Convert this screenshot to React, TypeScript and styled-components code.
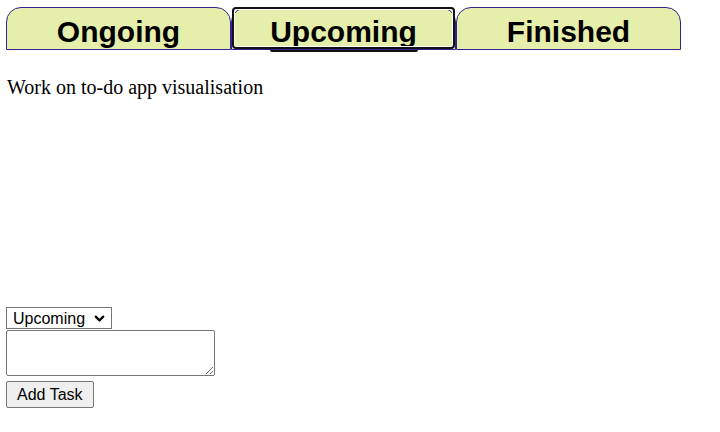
import React, { useState } from "react";
import styled, { createGlobalStyle } from "styled-components";
import { ChevronDown } from "lucide-react";

const GlobalStyle = createGlobalStyle`
  body {
    margin: 0;
    background: #fff;
    font-family: "Liberation Serif", "Times New Roman", serif;
  }
`;

const Page = styled.div`
  padding: 7px 6px 0;
`;

const TabBar = styled.nav`
  display: flex;
`;

const Tab = styled.button<{ $active?: boolean }>`
  position: relative;
  flex: 0 0 225px;
  height: 43px;
  box-sizing: border-box;
  padding: 7px 0 0;
  margin: 0;
  background: #e5eeab;
  border: 1px solid #34238c;
  border-radius: 15px 15px 0 0;
  font-family: "Liberation Sans", Arial, sans-serif;
  font-weight: bold;
  font-size: 30px;
  line-height: 34px;
  color: #000;
  text-align: center;
  cursor: pointer;

  ${(p) =>
    p.$active &&
    `
    &::before {
      content: "";
      position: absolute;
      top: -1px;
      left: 0;
      right: 0;
      bottom: 0;
      border: 2px solid #111;
      border-radius: 4px;
      box-shadow: inset 0 0 0 1px #fff;
    }
    &::after {
      content: "";
      position: absolute;
      top: calc(100% + 1px);
      left: 38px;
      width: 148px;
      height: 2px;
      background: #111;
      border-radius: 0 0 3px 3px;
    }
  `}
`;

const TaskList = styled.ul`
  list-style: none;
  margin: 26px 0 0;
  padding: 0 0 0 1px;
  height: 231px;
`;

const TaskItem = styled.li`
  font-size: 20px;
  line-height: 23px;
  font-family: "Liberation Serif", "Times New Roman", serif;
`;

const Form = styled.form`
  display: flex;
  flex-direction: column;
  align-items: flex-start;
`;

const SelectWrap = styled.div`
  position: relative;
  margin: 0 0 1px;

  svg {
    position: absolute;
    right: 5px;
    top: 4px;
    pointer-events: none;
  }
`;

const Select = styled.select`
  appearance: none;
  box-sizing: border-box;
  display: block;
  font-family: "Liberation Sans", Arial, sans-serif;
  font-size: 16px;
  color: #000;
  background: #fff;
  height: 22px;
  width: 106px;
  padding: 0 0 0 6px;
  border: 1px solid #767676;
  border-radius: 0;
`;

const TextArea = styled.textarea`
  box-sizing: border-box;
  width: 209px;
  height: 46px;
  margin: 0 0 5px;
  border: 1px solid #767676;
  border-radius: 2px;
`;

const Button = styled.button`
  font-family: "Liberation Sans", Arial, sans-serif;
  font-size: 16px;
  line-height: 19px;
  padding: 3px 10px;
  background: #efefef;
  border: 1px solid #767676;
  border-radius: 2px;
  color: #000;
`;

const tabs = ["Ongoing", "Upcoming", "Finished"];

export default function App() {
  const [active, setActive] = useState("Upcoming");

  return (
    <Page>
      <GlobalStyle />
      <TabBar>
        {tabs.map((t) => (
          <Tab key={t} $active={t === active} onClick={() => setActive(t)}>
            {t}
          </Tab>
        ))}
      </TabBar>
      <TaskList>
        <TaskItem>Work on to-do app visualisation</TaskItem>
      </TaskList>
      <Form onSubmit={(e) => e.preventDefault()}>
        <SelectWrap>
          <Select defaultValue="Upcoming">
            <option>Ongoing</option>
            <option>Upcoming</option>
            <option>Finished</option>
          </Select>
          <ChevronDown size={15} strokeWidth={3.5} color="#000" />
        </SelectWrap>
        <TextArea />
        <Button type="submit">Add Task</Button>
      </Form>
    </Page>
  );
}
